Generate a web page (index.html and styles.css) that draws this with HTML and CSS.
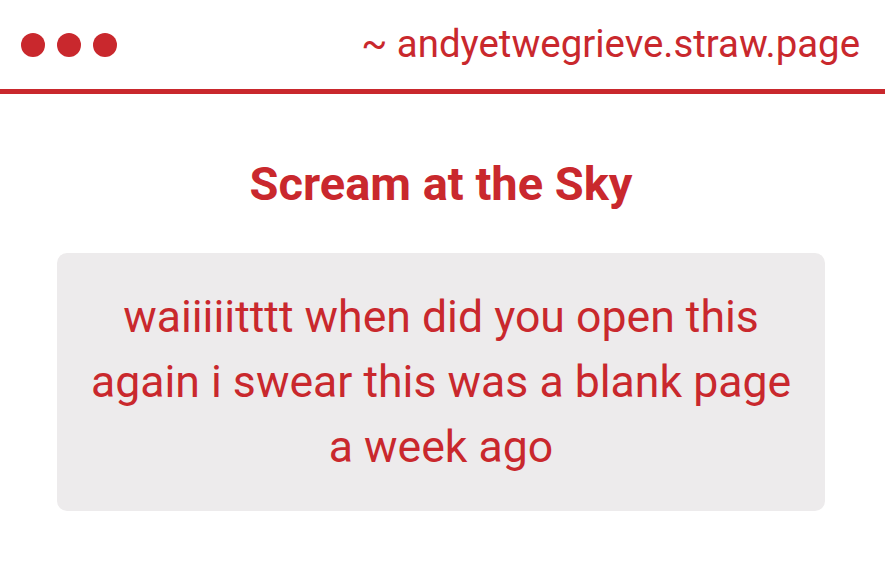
FILE: index.html
```html
<!DOCTYPE html>
<html>
<head>
<meta charset="utf-8">
<link rel="stylesheet" href="styles.css">
</head>
<body>
<div class="window">
  <header class="bar">
    <div class="dots"><span class="dot"></span><span class="dot"></span><span class="dot"></span></div>
    <div class="url">~ andyetwegrieve.straw.page</div>
  </header>
  <main class="content">
    <h1 class="title">Scream at the Sky</h1>
    <div class="card">
      <p class="msg">waiiiiitttt when did you open this again i swear this was a blank page a week ago</p>
    </div>
  </main>
</div>
</body>
</html>
```
FILE: styles.css
```css
html, body {
  margin: 0;
  padding: 0;
  background: #ffffff;
}
body {
  width: 885px;
  height: 569px;
  overflow: hidden;
  font-family: Roboto, "Liberation Sans", sans-serif;
  color: #c9282d;
}
.window {
  width: 885px;
}
.bar {
  height: 89px;
  border-bottom: 5px solid #c9282d;
  display: flex;
  align-items: center;
  justify-content: space-between;
  padding: 0 25px 0 21px;
  box-sizing: content-box;
}
.dots {
  display: flex;
  gap: 12px;
}
.dot {
  width: 24px;
  height: 24px;
  border-radius: 50%;
  background: #c9282d;
}
.url {
  font-size: 38.4px;
  line-height: 1;
}
.content {
  padding: 0 60px 0 57px;
  display: flex;
  flex-direction: column;
  align-items: center;
}
.title {
  margin: 66px 0 0 0;
  font-size: 47px;
  font-weight: 700;
  line-height: 1;
}
.card {
  margin-top: 46px;
  width: 768px;
  height: 258px;
  box-sizing: border-box;
  background: #edebec;
  border-radius: 10px;
  display: flex;
  align-items: center;
  justify-content: center;
  padding: 0 22px;
}
.msg {
  margin: 0;
  text-align: center;
  font-size: 44.6px;
  line-height: 65px;
}
```
